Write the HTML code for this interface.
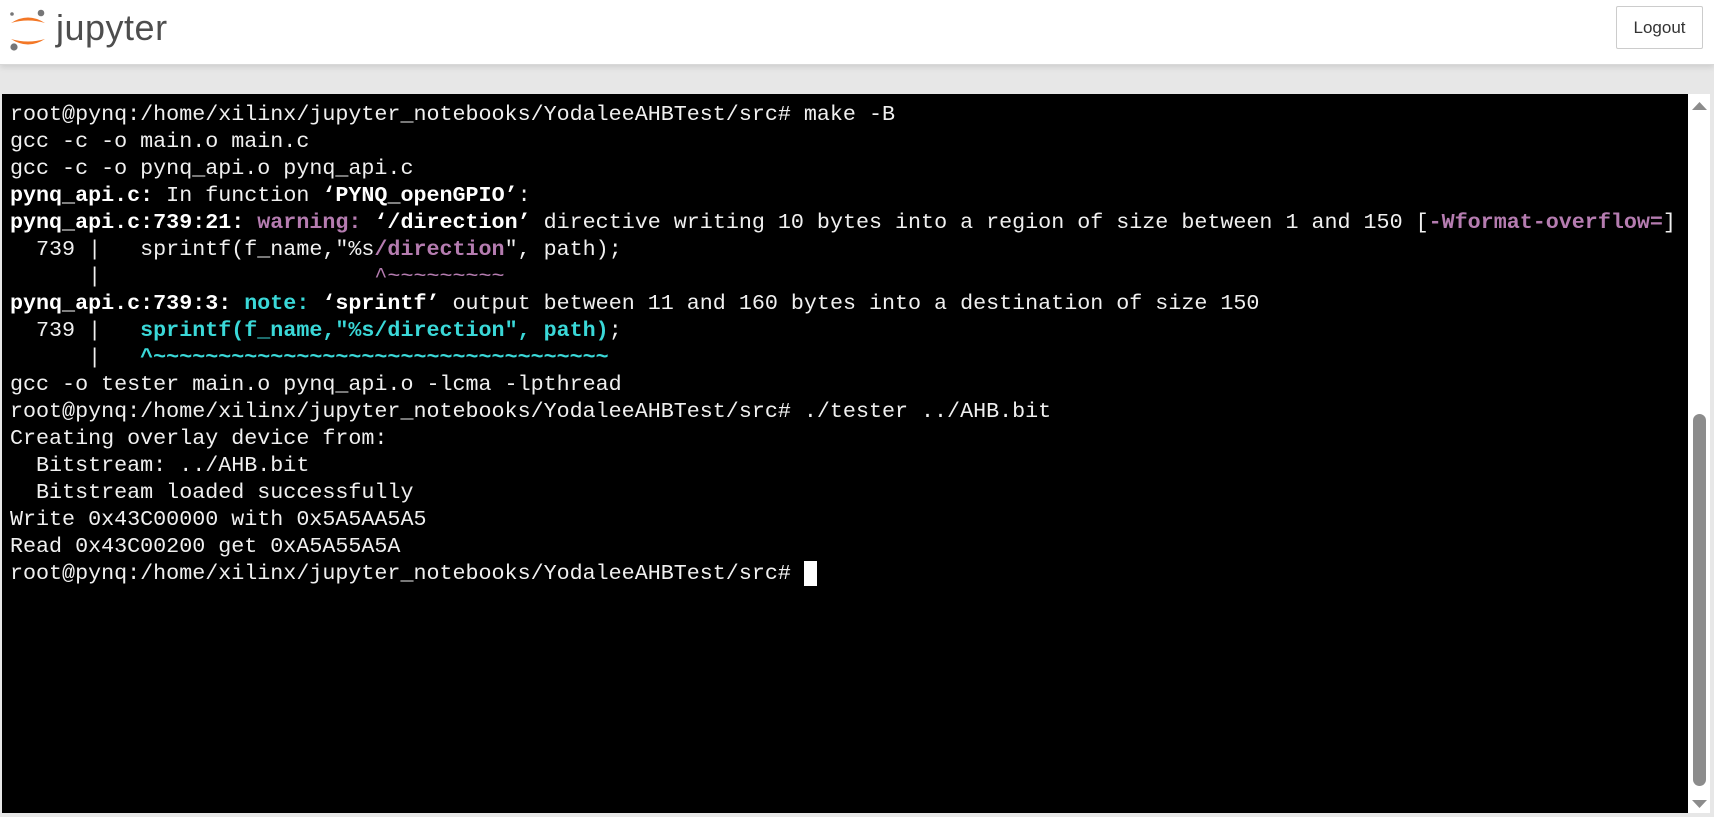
<!DOCTYPE html>
<html><head><meta charset="utf-8"><style>
html,body{margin:0;padding:0;width:1714px;height:817px;overflow:hidden;background:#e7e7e7;font-family:"Liberation Sans",sans-serif}
#hdr{position:absolute;left:0;top:0;width:1714px;height:64px;background:#fff;border-bottom:1px solid #d8d8d8;box-shadow:0 2px 6px rgba(0,0,0,.12)}
#logout{position:absolute;left:1616px;top:6px;border:1px solid #ccc;border-radius:2px;font-size:17px;color:#333;text-align:center;line-height:42px;box-sizing:border-box;width:87px;height:43px}
#jt{position:absolute;left:56px;top:7px;font-size:36px;color:#4e4e4e;letter-spacing:0.5px}
#term{position:absolute;left:2px;top:94px;width:1686px;height:719px;background:#000;overflow:hidden}
#sb{position:absolute;left:1688px;top:94px;width:22px;height:719px;background:#fff}
#thumb{position:absolute;left:5px;top:320px;width:13px;height:372px;background:#8c8c8c;border-radius:7px}
pre{margin:0;position:absolute;left:8px;top:7px;font-family:"Liberation Mono",monospace;font-size:21.7px;line-height:27px;color:#f0f0f0}
b{font-weight:bold;color:#fff}
.m{color:#b57cb0;font-weight:bold}
.mm{color:#b57cb0}
.c{color:#3ad8d8;font-weight:bold}
.cur{background:#fff;color:#000}
</style></head><body>
<div id="hdr">
<svg style="position:absolute;left:8px;top:8px" width="40" height="44" viewBox="0 0 40 44">
<circle cx="33" cy="5" r="3.3" fill="#767677"/>
<circle cx="6" cy="39" r="3.6" fill="#767677"/>
<circle cx="4" cy="6" r="1.8" fill="#767677"/>
<path d="M3 15 Q20 4 37 15 Q20 10 3 15Z" fill="#f37726"/>
<path d="M3 31 Q20 42 37 31 Q20 36 3 31Z" fill="#f37726"/>
</svg>
<div id="jt">jupyter</div>
<div id="logout">Logout</div>
</div>
<div id="term"><pre>root@pynq:/home/xilinx/jupyter_notebooks/YodaleeAHBTest/src# make -B
gcc -c -o main.o main.c
gcc -c -o pynq_api.o pynq_api.c
<b>pynq_api.c:</b> In function <b>‘PYNQ_openGPIO’</b>:
<b>pynq_api.c:739:21:</b> <span class="m">warning: </span><b>‘/direction’</b> directive writing 10 bytes into a region of size between 1 and 150 [<span class="m">-Wformat-overflow=</span>]
  739 |   sprintf(f_name,"%s<span class="m">/direction</span>", path);
      |                     <span class="mm">^~~~~~~~~~</span>
<b>pynq_api.c:739:3:</b> <span class="c">note: </span><b>‘sprintf’</b> output between 11 and 160 bytes into a destination of size 150
  739 |   <span class="c">sprintf(f_name,"%s/direction", path)</span>;
      |   <span class="c">^~~~~~~~~~~~~~~~~~~~~~~~~~~~~~~~~~~~</span>
gcc -o tester main.o pynq_api.o -lcma -lpthread
root@pynq:/home/xilinx/jupyter_notebooks/YodaleeAHBTest/src# ./tester ../AHB.bit
Creating overlay device from:
  Bitstream: ../AHB.bit
  Bitstream loaded successfully
Write 0x43C00000 with 0x5A5AA5A5
Read 0x43C00200 get 0xA5A55A5A
root@pynq:/home/xilinx/jupyter_notebooks/YodaleeAHBTest/src# <span class="cur"> </span></pre></div>
<div id="sb">
<svg style="position:absolute;left:4px;top:8px" width="15" height="9"><path d="M0 8 L7.5 0 L15 8Z" fill="#8c8c8c"/></svg>
<div id="thumb"></div>
<svg style="position:absolute;left:4px;top:706px" width="15" height="9"><path d="M0 0 L7.5 8 L15 0Z" fill="#8c8c8c"/></svg>
</div>
</body></html>
